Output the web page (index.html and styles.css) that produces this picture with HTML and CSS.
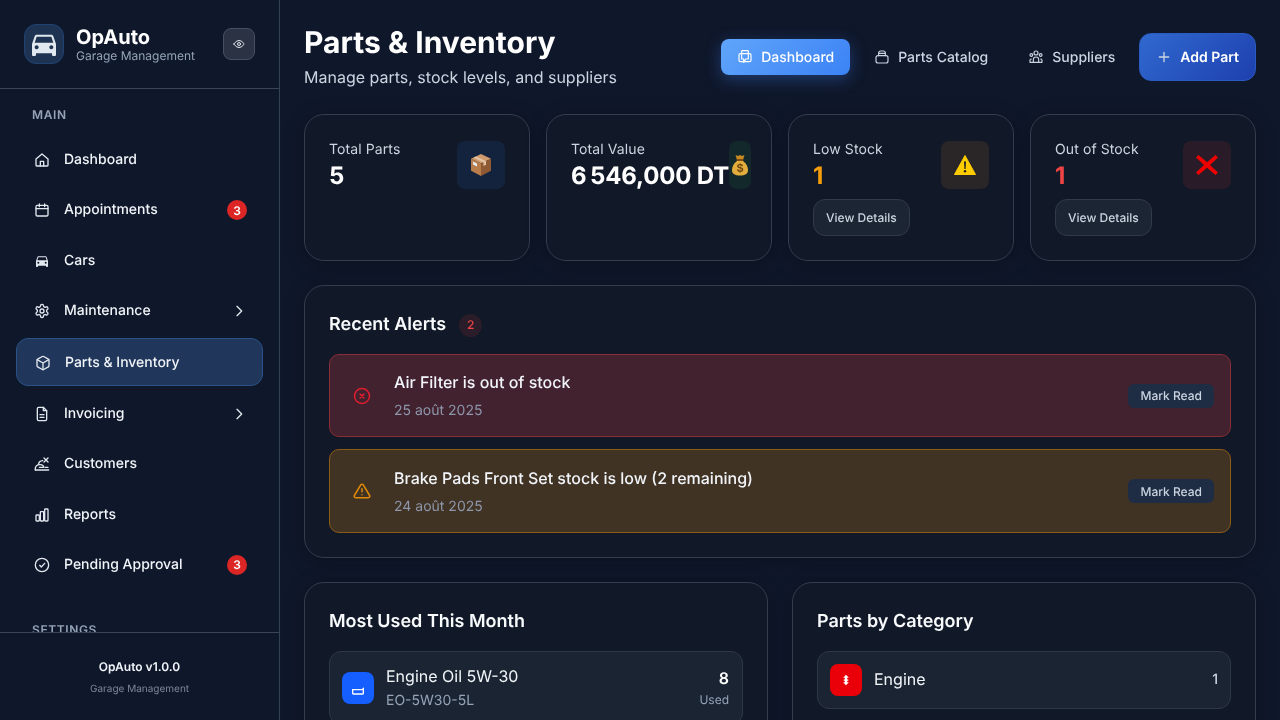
FILE: index.html
```html
<!DOCTYPE html>
<html lang="en">
<head>
<meta charset="utf-8">
<title>Parts &amp; Inventory</title>
<link rel="stylesheet" href="styles.css">
</head>
<body>
<div class="app">
  <aside class="sidebar">
    <div class="brand">
      <div class="logo"><svg viewBox="0 0 24 24" class="logo-car"><path d="M18.92 6.01C18.72 5.42 18.16 5 17.5 5h-11c-.66 0-1.21.42-1.42 1.01L3 12v8c0 .55.45 1 1 1h1c.55 0 1-.45 1-1v-1h12v1c0 .55.45 1 1 1h1c.55 0 1-.45 1-1v-8l-2.08-5.99zM6.5 16c-.83 0-1.5-.67-1.5-1.5S5.67 13 6.5 13s1.5.67 1.5 1.5S7.33 16 6.5 16zm11 0c-.83 0-1.5-.67-1.5-1.5s.67-1.5 1.5-1.5 1.5.67 1.5 1.5-.67 1.5-1.5 1.5zM5 11l1.5-4.5h11L19 11H5z"/></svg></div>
      <div class="brand-text">
        <div class="brand-name">OpAuto</div>
        <div class="brand-sub">Garage Management</div>
      </div>
      <button class="eye-btn"><svg viewBox="0 0 24 24" class="ico ico-s"><path d="M2 12s3.5-7 10-7 10 7 10 7-3.500 7-10 7-10-7-10-7z"/><circle cx="12" cy="12" r="3"/></svg></button>
    </div>
    <nav class="nav">
      <div class="nav-label">MAIN</div>
      <ul class="nav-list">
        <li class="nav-item"><svg viewBox="0 0 24 24" class="ico"><path d="M3 10.5 12 3l9 7.500V20a1 1 0 0 1-1 1H4a1 1 0 0 1-1-1z"/><path d="M9.500 21v-7h5v7"/></svg><span class="nav-text">Dashboard</span></li>
        <li class="nav-item"><svg viewBox="0 0 24 24" class="ico"><rect x="3" y="5" width="18" height="16" rx="2"/><path d="M8 3v4M16 3v4M3 10h18"/></svg><span class="nav-text">Appointments</span><span class="count">3</span></li>
        <li class="nav-item"><svg viewBox="0 0 24 24" class="ico ico-fill"><path d="M18.920 6.010C18.720 5.420 18.160 5 17.500 5h-11c-.66 0-1.210.42-1.420 1.010L3 12v8c0 .55.45 1 1 1h1c.55 0 1-.45 1-1v-1h12v1c0 .55.45 1 1 1h1c.55 0 1-.45 1-1v-8zM6.500 16a1.500 1.500 0 1 1 0-3 1.500 1.500 0 0 1 0 3zm11 0a1.500 1.500 0 1 1 0-3 1.500 1.500 0 0 1 0 3zM5 11l1.500-4.500h11L19 11z"/></svg><span class="nav-text">Cars</span></li>
        <li class="nav-item"><svg viewBox="0 0 24 24" class="ico"><circle cx="12" cy="12" r="3"/><path d="M12.200 2h-.4a2 2 0 0 0-2 2v.2a2 2 0 0 1-1 1.700l-.4.2a2 2 0 0 1-2 0l-.2-.1a2 2 0 0 0-2.700.7l-.2.4a2 2 0 0 0 .7 2.700l.2.1a2 2 0 0 1 1 1.700v.5a2 2 0 0 1-1 1.700l-.2.1a2 2 0 0 0-.7 2.700l.2.4a2 2 0 0 0 2.700.7l.2-.1a2 2 0 0 1 2 0l.4.2a2 2 0 0 1 1 1.700v.2a2 2 0 0 0 2 2h.4a2 2 0 0 0 2-2v-.2a2 2 0 0 1 1-1.700l.4-.2a2 2 0 0 1 2 0l.2.1a2 2 0 0 0 2.700-.7l.2-.4a2 2 0 0 0-.7-2.700l-.2-.1a2 2 0 0 1-1-1.700v-.5a2 2 0 0 1 1-1.700l.2-.1a2 2 0 0 0 .7-2.700l-.2-.4a2 2 0 0 0-2.700-.7l-.2.1a2 2 0 0 1-2 0l-.4-.2a2 2 0 0 1-1-1.700V4a2 2 0 0 0-2-2z"/></svg><span class="nav-text">Maintenance</span><svg viewBox="0 0 24 24" class="ico chev"><path d="m9 5 7 7-7 7"/></svg></li>
        <li class="nav-item active"><svg viewBox="0 0 24 24" class="ico"><path d="M21 8a2 2 0 0 0-1-1.730l-7-4a2 2 0 0 0-2 0l-7 4A2 2 0 0 0 3 8v8a2 2 0 0 0 1 1.730l7 4a2 2 0 0 0 2 0l7-4A2 2 0 0 0 21 16z"/><path d="m3.300 7 8.700 5 8.700-5M12 22V12"/></svg><span class="nav-text">Parts &amp; Inventory</span></li>
        <li class="nav-item"><svg viewBox="0 0 24 24" class="ico"><path d="M14 2H7a2 2 0 0 0-2 2v16a2 2 0 0 0 2 2h10a2 2 0 0 0 2-2V7z"/><path d="M14 2v5h5M9 13h6M9 17h6"/></svg><span class="nav-text">Invoicing</span><svg viewBox="0 0 24 24" class="ico chev"><path d="m9 5 7 7-7 7"/></svg></li>
        <li class="nav-item"><svg viewBox="0 0 24 24" class="ico"><path d="M2 21v-2.500c0-3 3-5.500 6-5.500h2c2.500 0 4 1.500 5 4H8"/><path d="M2 21h20M17 17h4M15 3l6 6M21 3l-6 6M7 12c0-3 2-4.500 6-5"/></svg><span class="nav-text">Customers</span></li>
        <li class="nav-item"><svg viewBox="0 0 24 24" class="ico"><rect x="3" y="12" width="5" height="9" rx="1"/><rect x="9.500" y="7" width="5" height="14" rx="1"/><rect x="16" y="3" width="5" height="18" rx="1"/></svg><span class="nav-text">Reports</span></li>
        <li class="nav-item"><svg viewBox="0 0 24 24" class="ico"><circle cx="12" cy="12" r="10"/><path d="m8.500 12.500 2.500 2.500 5-5.500"/></svg><span class="nav-text">Pending Approval</span><span class="count">3</span></li>
      </ul>
      <div class="nav-label settings">SETTINGS</div>
    </nav>
    <div class="side-foot">
      <div class="foot-name">OpAuto v1.0.0</div>
      <div class="foot-sub">Garage Management</div>
    </div>
  </aside>

  <main class="main">
    <header class="top">
      <div class="titles">
        <h1 class="page-title">Parts &amp; Inventory</h1>
        <p class="page-sub">Manage parts, stock levels, and suppliers</p>
      </div>
      <div class="actions">
        <button class="tab tab-on"><svg viewBox="0 0 24 24" class="ico"><rect x="3" y="7" width="18" height="12" rx="2"/><path d="M7 7V3.500a1 1 0 0 1 1-1h8a1 1 0 0 1 1 1V15h-4l-3 5v-5H7z"/></svg>Dashboard</button>
        <button class="tab"><svg viewBox="0 0 24 24" class="ico"><path d="M7 10V6a3 3 0 0 1 3-3h4a3 3 0 0 1 3 3v4"/><rect x="3" y="10" width="18" height="11" rx="3"/><path d="M7 6.500h10"/></svg>Parts Catalog</button>
        <button class="tab"><svg viewBox="0 0 24 24" class="ico"><circle cx="12" cy="6" r="3"/><circle cx="5" cy="9" r="2"/><circle cx="19" cy="9" r="2"/><path d="M8 20v-4a4 4 0 0 1 8 0v4zM3 20v-3a2 2 0 0 1 2-2M21 20v-3a2 2 0 0 0-2-2M3 20h18"/></svg>Suppliers</button>
        <button class="add-btn"><svg viewBox="0 0 24 24" class="ico ico-plus"><path d="M12 5v14M5 12h14"/></svg>Add Part</button>
      </div>
    </header>

    <section class="stats">
      <article class="stat">
        <div class="stat-head">
          <div class="stat-text"><div class="stat-label">Total Parts</div><div class="stat-value">5</div></div>
          <div class="stat-icon tint-blue"><svg viewBox="0 0 22 22" class="emoji"><path d="M11 0 21 4.800 11 9.600 1 4.800z" fill="#cf9a6c"/><path d="M1 4.800 11 9.600V22L1 16.800z" fill="#b97d4b"/><path d="M21 4.800 11 9.600V22l10-5.200z" fill="#8e5a34"/><path d="M6 2.400 16 7.200v3.500l-2.500 1.200V8.400L3.500 3.600z" fill="#e3c4a4"/><path d="M3 7.500 7 9.500v3L3 10.500z" fill="#e8edf2"/></svg></div>
        </div>
      </article>
      <article class="stat">
        <div class="stat-head">
          <div class="stat-text"><div class="stat-label">Total Value</div><div class="stat-value">6&#8239;546,000 DT</div></div>
          <div class="stat-icon tint-green"><svg viewBox="0 0 22 22" class="emoji"><path d="M6.500 1 9 2l2-1 2 1 2.500-1-1.500 5H8z" fill="#c98a22"/><rect x="7.500" y="5" width="7" height="2" rx="1" fill="#7c4e13"/><path d="M8 7C4.500 9.500 3 13 3 16c0 4 3 5.500 8 5.500s8-1.500 8-5.500c0-3-1.500-6.500-5-9z" fill="#e3ad3d"/><text x="11" y="18" text-anchor="middle" class="emoji-dollar">$</text></svg></div>
        </div>
      </article>
      <article class="stat">
        <div class="stat-head">
          <div class="stat-text"><div class="stat-label">Low Stock</div><div class="stat-value amber">1</div></div>
          <div class="stat-icon tint-amber"><svg viewBox="0 0 22 22" class="emoji"><path d="M11 1.500 21.500 20.500H.5z" fill="#ffcc00" stroke="#ffcc00" stroke-linejoin="round"/><path d="M10 7.500h2l-.4 7.500h-1.200z" fill="#222"/><circle cx="11" cy="17.200" r="1.200" fill="#222"/></svg></div>
        </div>
        <button class="details">View Details</button>
      </article>
      <article class="stat">
        <div class="stat-head">
          <div class="stat-text"><div class="stat-label">Out of Stock</div><div class="stat-value red">1</div></div>
          <div class="stat-icon tint-red"><svg viewBox="0 0 22 22" class="emoji"><path d="M2.500 1 11 8.200 19.500 1 22 3.500 14 11l8 7.500-2.500 2.500L11 13.800 2.500 21 0 18.500 8 11 0 3.500z" fill="#ee0000"/></svg></div>
        </div>
        <button class="details">View Details</button>
      </article>
    </section>

    <section class="panel alerts">
      <div class="panel-head">
        <h2 class="panel-title">Recent Alerts</h2>
        <span class="alert-count">2</span>
      </div>
      <div class="alert alert-red">
        <svg viewBox="0 0 24 24" class="alert-ico"><circle cx="12" cy="12" r="10"/><path d="m9.500 9.500 5 5M14.500 9.500l-5 5"/></svg>
        <div class="alert-body"><div class="alert-title">Air Filter is out of stock</div><div class="alert-date">25 août 2025</div></div>
        <button class="mark">Mark Read</button>
      </div>
      <div class="alert alert-amber">
        <svg viewBox="0 0 24 24" class="alert-ico"><path d="M10.300 3.900 1.800 18a2 2 0 0 0 1.700 3h17a2 2 0 0 0 1.700-3L13.700 3.900a2 2 0 0 0-3.400 0z"/><path d="M12 9v4M12 17h.01"/></svg>
        <div class="alert-body"><div class="alert-title">Brake Pads Front Set stock is low (2 remaining)</div><div class="alert-date">24 août 2025</div></div>
        <button class="mark">Mark Read</button>
      </div>
    </section>

    <section class="columns">
      <div class="panel col">
        <h2 class="panel-title col-title">Most Used This Month</h2>
        <div class="row">
          <div class="row-icon bg-blue"><svg viewBox="0 0 24 24" class="glyph"><path d="M4 14.500h14l2-1.500v7a1 1 0 0 1-1 1H5a1 1 0 0 1-1-1z"/></svg></div>
          <div class="row-main"><div class="row-name">Engine Oil 5W-30</div><div class="row-sub">EO-5W30-5L</div></div>
          <div class="row-used"><div class="used-num">8</div><div class="used-label">Used</div></div>
        </div>
      </div>
      <div class="panel col">
        <h2 class="panel-title col-title">Parts by Category</h2>
        <div class="row">
          <div class="row-icon bg-red"><svg viewBox="0 0 24 24" class="glyph-fill"><path d="M12 3l5 5h-3v2.500l3 1.500-3 1.500V16h3l-5 5-5-5h3v-2.500L7 12l3-1.500V8H7z"/></svg></div>
          <div class="row-main"><div class="row-name">Engine</div></div>
          <div class="row-count">1</div>
        </div>
      </div>
    </section>
  </main>
</div>
</body>
</html>
```
FILE: styles.css
```css
* { box-sizing: border-box; }
html, body { margin: 0; height: 100%; overflow: hidden; }
body {
  font-family: Inter, "Liberation Sans", sans-serif;
  background: #0f172a;
  color: #f8fafc;
  line-height: 1.6;
  text-rendering: geometricPrecision;
  -webkit-font-smoothing: antialiased;
}
button { font-family: inherit; cursor: pointer; text-rendering: geometricPrecision; }
ul { list-style: none; margin: 0; padding: 0; }
h1, h2, p { margin: 0; }

.app { display: flex; height: 720px; will-change: transform; }

.ico {
  width: 16px; height: 16px; flex: none;
  fill: none; stroke: currentColor; stroke-width: 2;
  stroke-linecap: round; stroke-linejoin: round;
}
.ico-fill { fill: currentColor; stroke: none; }
.ico-s { width: 12px; height: 12px; }

/* Sidebar */
.sidebar {
  width: 280px; flex: none; height: 720px;
  display: flex; flex-direction: column;
  background: #0f172a;
  border-right: 1px solid #334155;
}
.brand {
  height: 89px; flex: none;
  display: flex; align-items: center;
  padding: 0 24px;
  border-bottom: 1px solid #3b4557;
}
.logo {
  width: 40px; height: 40px; flex: none;
  display: flex; align-items: center; justify-content: center;
  border-radius: 12px;
  background: #1e3352;
  border: 1px solid #1f4272;
}
.logo-car { width: 32px; height: 32px; fill: #e2e8f0; }
.brand-text { margin-left: 12px; flex: 1; }
.brand-name { font-size: 20px; font-weight: 700; line-height: 24px; color: #fff; }
.brand-sub { font-size: 12px; line-height: 14px; color: #94a3b8; }
.eye-btn {
  width: 32px; height: 32px; flex: none; padding: 0;
  display: flex; align-items: center; justify-content: center;
  border-radius: 8px;
  background: #2a3243; border: 1px solid #475063; color: #e2e8f0;
}

.nav { flex: 1; overflow: hidden; padding: 16px 0 0; min-height: 0; }
.nav-label {
  padding: 0 32px;
  font-size: 12px; font-weight: 600; letter-spacing: .6px; color: #94a3b8;
  margin-bottom: 12.600px;
}
.nav-label.settings { margin-top: 31.400px; }
.nav-list { display: flex; flex-direction: column; gap: 4px; }
.nav-item {
  display: flex; align-items: center; gap: 14px;
  margin: 0 16px; padding: 12px 16px 12px 18px;
  font-size: 14px; font-weight: 500; color: #f1f5f9;
  border-radius: 12px;
}
.nav-item .ico { color: #e2e8f0; }
.nav-item.active {
  padding-top: 12.600px; padding-bottom: 10.400px; margin-bottom: 1px;
  background: #20365a; border: 1px solid #2a5288;
}
.nav-text { flex: 1; }
.count {
  width: 20px; height: 20px; flex: none;
  display: flex; align-items: center; justify-content: center;
  border-radius: 50%;
  background: #dc2626; color: #fff;
  font-size: 12px; font-weight: 600;
}
.chev { width: 16px; height: 16px; }

.side-foot {
  height: 88px; flex: none;
  display: flex; flex-direction: column; align-items: center;
  padding-top: 24px;
  border-top: 1px solid #3b4557;
}
.foot-name { font-size: 12px; font-weight: 600; line-height: 20px; color: #f1f5f9; }
.foot-sub { font-size: 10px; line-height: 16px; margin-top: 4px; color: #7d8798; }

/* Main */
.main {
  flex: 1; min-width: 0; height: 720px; overflow: hidden;
  padding: 24px;
  background: #0f172a;
}
.top { display: flex; justify-content: space-between; align-items: center; height: 66px; margin-bottom: 24px; }
.page-title { font-size: 30px; font-weight: 700; line-height: 36px; color: #fff; }
.page-sub { font-size: 16px; line-height: 26px; margin-top: 3px; color: #cbd5e1; }
.actions { display: flex; align-items: center; gap: 8px; }
.tab {
  height: 36px; padding: 0 16px;
  display: flex; align-items: center; gap: 8px;
  background: none; border: 0; border-radius: 8px;
  font-size: 14px; font-weight: 500; color: #cbd5e1;
}
.tab .ico { stroke-width: 1.750; }
.tab-on {
  background: linear-gradient(135deg, #60a5fa, #3b82f6);
  color: #fff;
  box-shadow: 0 4px 16px rgba(59, 130, 246, .35);
}
.add-btn {
  height: 48px; padding: 0 16px;
  display: flex; align-items: center; gap: 8px;
  border: 1px solid #2a5bc0; border-radius: 12px;
  background: linear-gradient(135deg, #3069cf, #1e40af);
  font-size: 14px; font-weight: 600; color: #fff;
}
.ico-plus { color: #cbd5e1; stroke-width: 2; }

.stats { display: grid; grid-template-columns: repeat(4, minmax(0, 1fr)); gap: 16px; margin-bottom: 24px; }
.stat {
  height: 147px; padding: 24px;
  background: #111827;
  border: 1px solid #343d4d; border-radius: 20px;
  box-shadow: 0 4px 20px rgba(0, 0, 0, .25);
}
.stat-head { display: flex; justify-content: space-between; align-items: center; }
.stat-text { white-space: nowrap; }
.stat-label { font-size: 14px; line-height: 20px; padding-top: 1px; letter-spacing: .1px; color: #cbd5e1; }
.stat-value { font-size: 24px; font-weight: 700; line-height: 31px; letter-spacing: -.15px; color: #fff; }
.stat-value.amber { color: #f59e0b; }
.stat-value.red { color: #ef4444; }
.stat-icon {
  width: 48px; height: 48px;
  display: flex; align-items: center; justify-content: center;
  border-radius: 8px;
}
.emoji { width: 22px; height: 22px; flex: none; }
.emoji-dollar { font-family: "Liberation Sans", sans-serif; font-size: 12px; font-weight: 700; fill: #6b4510; }
.tint-blue { background: #14233d; }
.tint-green { background: #13282b; }
.tint-amber { background: #2a2627; }
.tint-red { background: #291c28; }
.details {
  display: block; margin-top: 8px;
  height: 37px; padding: 0 12px;
  background: #1b2533; border: 1px solid #303a4a; border-radius: 12px;
  font-size: 12px; font-weight: 500; color: #cbd5e1;
}

.panel {
  padding: 25px 24px 24px;
  background: #111827;
  border: 1px solid #343d4d; border-radius: 20px;
  box-shadow: 0 4px 20px rgba(0, 0, 0, .25);
}
.alerts { height: 273px; margin-bottom: 24px; }
.panel-head { display: flex; align-items: center; gap: 13px; height: 28px; margin-bottom: 15px; }
.panel-title { font-size: 18px; font-weight: 600; line-height: 28px; color: #f8fafc; }
.alert-count {
  width: 23px; height: 23px;
  display: flex; align-items: center; justify-content: center;
  border-radius: 50%; background: #2a1c28;
  font-size: 12px; font-weight: 500; color: #ef4444;
}
.alert {
  display: flex; align-items: center; gap: 23px;
  height: 83.400px; padding: 0 16px 0 23px;
  border-radius: 10px;
}
.alert + .alert { margin-top: 12px; height: 83.600px; }
.alert-red { background: #42222f; border: 1px solid #8a2d37; color: #e11d2e; }
.alert-amber { background: #413324; border: 1px solid #8a5c16; color: #e08a07; }
.alert-ico {
  width: 18px; height: 18px; flex: none;
  fill: none; stroke: currentColor; stroke-width: 2;
  stroke-linecap: round; stroke-linejoin: round;
}
.alert-body { flex: 1; padding-top: 1.500px; }
.alert-title { font-size: 16px; font-weight: 500; line-height: 25.600px; color: #f1f5f9; }
.alert-date { font-size: 14px; line-height: 22.400px; margin-top: 4px; color: #8d96ab; }
.mark {
  height: 24px; padding: 0 12px;
  background: #1e2d44; border: 0; border-radius: 6px;
  font-size: 12px; font-weight: 500; color: #cbd5e1;
}

.columns { display: grid; grid-template-columns: 1fr 1fr; gap: 24px; }
.col { height: 300px; }
.col-title { margin-bottom: 15px; }
.row {
  display: flex; align-items: center; gap: 12px;
  padding: 12px;
  background: #1a2432;
  border: 1px solid #2d3747; border-radius: 12px;
}
.row-icon {
  width: 32px; height: 32px; flex: none;
  display: flex; align-items: center; justify-content: center;
  border-radius: 8px;
}
.bg-blue { background: #155eff; margin-bottom: 1px; }
.bg-red { background: #e90009; }
.glyph { width: 16px; height: 16px; fill: none; stroke: #fff; stroke-width: 2; }
.glyph-fill { width: 14px; height: 14px; fill: #fff; }
.row-main { flex: 1; }
.row-name { font-size: 16px; line-height: 25.600px; color: #f1f5f9; }
.row-sub { font-size: 14px; line-height: 22.400px; color: #94a3b8; }
.row-used { text-align: right; padding: 0 1px 2px 0; }
.used-num { font-size: 16px; font-weight: 600; line-height: 25px; color: #fff; }
.used-label { font-size: 12px; line-height: 18px; color: #94a3b8; }
.row-count { font-size: 14px; font-weight: 500; color: #cbd5e1; }
```
